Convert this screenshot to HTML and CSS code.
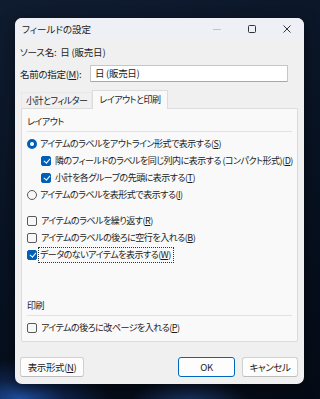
FILE: index.html
```html
<!DOCTYPE html>
<html lang="ja">
<head>
  <meta charset="UTF-8">
  <meta name="viewport" content="width=device-width, initial-scale=1">
  <title>フィールドの設定</title>
  <link rel="stylesheet" href="styles.css">
</head>
<body>
  <!-- ダイアログ本体 -->
  <div class="dialog">
    <div class="titlebar">
      <span class="title">フィールドの設定</span>
      <div class="win-btns">
        <span class="win-btn">
          <svg width="10" height="10" viewBox="0 0 10 10"><path d="M1 5.5h8" stroke="#c4c4c4" stroke-width="1"/></svg>
        </span>
        <span class="win-btn">
          <svg width="10" height="10" viewBox="0 0 10 10"><rect x="1.5" y="1.5" width="7" height="7" rx="1" fill="none" stroke="#333" stroke-width="1"/></svg>
        </span>
        <span class="win-btn">
          <svg width="10" height="10" viewBox="0 0 10 10"><path d="M1.5 1.5l7 7M8.5 1.5l-7 7" stroke="#333" stroke-width="1"/></svg>
        </span>
      </div>
    </div>

    <div class="content">
      <div class="source-row">ソース名:&nbsp;&nbsp;日 (販売日)</div>
      <div class="name-row">
        <span>名前の指定(<u>M</u>):</span>
        <div class="text-input">日 (販売日)</div>
      </div>

      <!-- タブ -->
      <div class="tabs">
        <span class="tab">小計とフィルター</span>
        <span class="tab active">レイアウトと印刷</span>
      </div>

      <div class="panel">
        <div class="group">
          <div class="group-label">レイアウト</div>
          <div class="sep"></div>
          <div class="row first"><span class="radio on"></span>アイテムのラベルをアウトライン形式で表示する(<u>S</u>)</div>
          <div class="row indent"><span class="check on"></span>隣のフィールドのラベルを同じ列内に表示する (コンパクト形式)(<u>D</u>)</div>
          <div class="row indent"><span class="check on"></span>小計を各グループの先頭に表示する(<u>T</u>)</div>
          <div class="row"><span class="radio"></span>アイテムのラベルを表形式で表示する(<u>I</u>)</div>
          <div class="row spaced"><span class="check"></span>アイテムのラベルを繰り返す(<u>R</u>)</div>
          <div class="row"><span class="check"></span>アイテムのラベルの後ろに空行を入れる(<u>B</u>)</div>
          <div class="row"><span class="check on"></span><span class="focus">データのないアイテムを表示する(<u>W</u>)</span></div>
        </div>

        <div class="group bottom">
          <div class="group-label">印刷</div>
          <div class="sep"></div>
          <div class="row first"><span class="check"></span>アイテムの後ろに改ページを入れる(<u>P</u>)</div>
        </div>
      </div>

      <div class="footer">
        <button class="btn">表示形式(<u>N</u>)</button>
        <span class="spacer"></span>
        <button class="btn default">OK</button>
        <button class="btn">キャンセル</button>
      </div>
    </div>
  </div>
</body>
</html>
```

FILE: styles.css
```css
/* リセット */
* {
  margin: 0;
  padding: 0;
  box-sizing: border-box;
}
body {
  width: 320px;
  height: 399px;
  overflow: hidden;
  font-family: "Noto Sans CJK JP", sans-serif;
  font-feature-settings: "palt";
  font-size: 9px;
  letter-spacing: -0.5px;
  color: #1b1b1b;
  background:
    radial-gradient(ellipse 90px 40px at 20px 399px, #1f4f9e 0%, rgba(20, 50, 110, 0.5) 50%, transparent 100%),
    radial-gradient(ellipse 60px 30px at 190px 405px, rgba(40, 80, 150, 0.6) 0%, transparent 100%),
    linear-gradient(160deg, #0f1c30 0%, #081222 50%, #050b16 100%);
  padding: 18px 0 0 15px;
}
u {
  text-decoration: underline;
  text-underline-offset: 1px;
}
/* ダイアログ */
.dialog {
  width: 289px;
  height: 366px;
  background: #f0f0f0;
  border-radius: 7px;
  overflow: hidden;
  display: flex;
  flex-direction: column;
  box-shadow: 0 4px 14px rgba(0, 0, 0, 0.5);
}
.titlebar {
  height: 22px;
  background: #eef0f6;
  display: flex;
  align-items: center;
  padding-left: 7px;
}
.title {
  flex: 1;
  font-size: 9.5px;
  letter-spacing: 0;
  color: #222;
}
.win-btns {
  display: flex;
  height: 100%;
}
.win-btn {
  width: 35px;
  display: flex;
  align-items: center;
  justify-content: center;
}
/* 本文 */
.content {
  flex: 1;
  display: flex;
  flex-direction: column;
  padding: 0 6px 7px 5px;
}
.source-row {
  margin-top: 6px;
  height: 14px;
  line-height: 14px;
  font-size: 9.5px;
  letter-spacing: -0.2px;
}
.name-row {
  margin-top: 6px;
  height: 17px;
  display: flex;
  align-items: center;
  font-size: 9.5px;
  letter-spacing: -0.3px;
}
.name-row span {
  width: 70px;
}
.text-input {
  width: 198px;
  height: 17px;
  background: #fff;
  border: 1px solid #c6c6c6;
  border-bottom-color: #a8a8a8;
  border-radius: 1px;
  padding-left: 4px;
  line-height: 15px;
}
/* タブ */
.tabs {
  margin-top: 8px;
  margin-left: 1px;
  height: 18px;
  display: flex;
  align-items: flex-end;
  position: relative;
  z-index: 1;
}
.tab {
  height: 16px;
  line-height: 15px;
  padding: 0 4px;
  border: 1px solid #e8e8e8;
  border-bottom: none;
  white-space: nowrap;
}
.tab.active {
  height: 19px;
  line-height: 17px;
  padding: 0 6px;
  background: #f9f9f9;
  border-color: #dcdcdc;
  margin-bottom: -1px;
}
.panel {
  height: 234px;
  margin-left: 1px;
  background: #f9f9f9;
  border: 1px solid #dcdcdc;
  border-radius: 0 0 2px 2px;
  padding: 7px 5px 5px 5px;
  display: flex;
  flex-direction: column;
}
.group-label {
  height: 12px;
  line-height: 12px;
}
.sep {
  margin-top: 3px;
  height: 1px;
  background: #e2e2e2;
}
.group.bottom {
  margin-top: auto;
}
.row {
  height: 17px;
  display: flex;
  align-items: center;
  white-space: nowrap;
}
.row.first {
  margin-top: 3px;
}
.row.indent {
  padding-left: 14px;
}
.row.spaced {
  margin-top: 9px;
}
/* ラジオボタン・チェックボックス */
.radio {
  width: 10px;
  height: 10px;
  margin-right: 3px;
  border: 1px solid #5a5a5a;
  border-radius: 50%;
  background: #f7f7f7;
  flex-shrink: 0;
}
.radio.on {
  border: 3px solid #005fb8;
  background: #fff;
}
.check {
  width: 10px;
  height: 10px;
  margin-right: 4px;
  border: 1px solid #5a5a5a;
  border-radius: 2px;
  background: #f7f7f7;
  flex-shrink: 0;
  position: relative;
}
.check.on {
  border-color: #005fb8;
  background: #005fb8;
}
.check.on::after {
  content: "";
  position: absolute;
  left: 2.5px;
  top: 0.5px;
  width: 2.5px;
  height: 5px;
  border: solid #fff;
  border-width: 0 1.2px 1.2px 0;
  transform: rotate(40deg);
}
.focus {
  outline: 1px dotted #333;
  padding: 0 2px 0 1px;
  margin-left: -2px;
  line-height: 14px;
}
/* フッターのボタン */
.footer {
  margin-top: 15px;
  display: flex;
  gap: 7px;
}
.spacer {
  flex: 1;
}
.btn {
  height: 20px;
  font-family: inherit;
  font-feature-settings: "palt";
  font-size: 9.5px;
  letter-spacing: -0.4px;
  color: #1b1b1b;
  background: #fdfdfd;
  border: 1px solid #d0d0d0;
  border-bottom-color: #bdbdbd;
  border-radius: 3px;
  width: 56px;
}
.btn:first-child {
  width: 64px;
}
.btn.default {
  width: 57px;
  border: 1px solid #0067c0;
}
```
